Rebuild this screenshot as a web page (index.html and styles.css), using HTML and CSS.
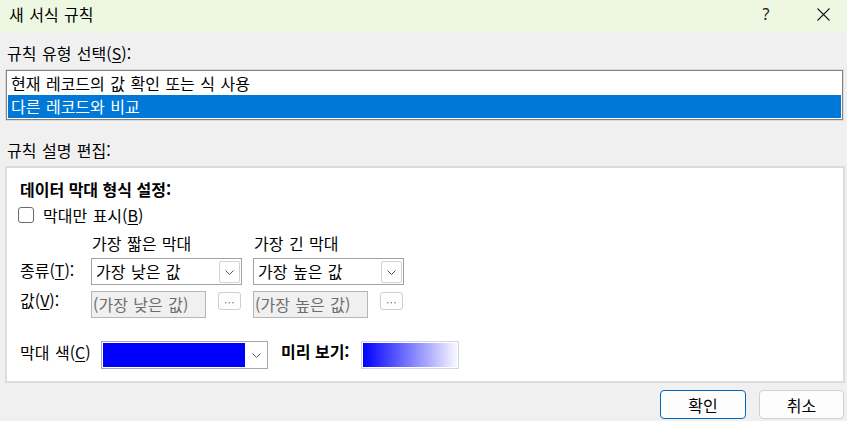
FILE: index.html
```html
<!DOCTYPE html>
<html lang="ko">
<head>
<meta charset="utf-8">
<title>새 서식 규칙</title>
<link rel="stylesheet" href="styles.css">
</head>
<body>
<div class="dialog">
  <div class="titlebar">
    <span class="title">새 서식 규칙</span>
    <span class="tb-btn help">?</span>
    <span class="tb-btn close"><svg width="13" height="13" viewBox="0 0 13 13"><path d="M0.5 0.5L12.5 12.5M12.5 0.5L0.5 12.5" stroke="#1a1a1a" stroke-width="1.1" fill="none"/></svg></span>
  </div>
  <div class="content">
    <div class="label l1">규칙 유형 선택(<u>S</u>):</div>
    <div class="listbox">
      <div class="list-inner">
        <div class="item">현재 레코드의 값 확인 또는 식 사용</div>
        <div class="item selected">다른 레코드와 비교</div>
      </div>
    </div>
    <div class="label l2">규칙 설명 편집:</div>
    <div class="panel">
      <div class="ptitle">데이터 막대 형식 설정:</div>
      <div class="check"><span class="box"></span><span>막대만 표시(<u>B</u>)</span></div>
      <div class="grid">
        <div></div>
        <div class="colhead">가장 짧은 막대</div>
        <div class="colhead">가장 긴 막대</div>
        <div class="rowlabel r1">종류(<u>T</u>):</div>
        <div class="combo"><span class="ctext">가장 낮은 값</span><span class="dd"><svg width="9" height="5" viewBox="0 0 9 5"><path d="M0.5 0.5L4.5 4.5L8.5 0.5" stroke="#555" stroke-width="1" fill="none"/></svg></span></div>
        <div class="combo"><span class="ctext">가장 높은 값</span><span class="dd"><svg width="9" height="5" viewBox="0 0 9 5"><path d="M0.5 0.5L4.5 4.5L8.5 0.5" stroke="#555" stroke-width="1" fill="none"/></svg></span></div>
        <div class="rowlabel r2">값(<u>V</u>):</div>
        <div class="valcell"><div class="tbox">(가장 낮은 값)</div><div class="ellip"><svg width="9" height="2" viewBox="0 0 9 2"><rect x="0" y="0" width="1.4" height="1.4" fill="#8a8a8a"/><rect x="3.6" y="0" width="1.4" height="1.4" fill="#8a8a8a"/><rect x="7.2" y="0" width="1.4" height="1.4" fill="#8a8a8a"/></svg></div></div>
        <div class="valcell"><div class="tbox">(가장 높은 값)</div><div class="ellip"><svg width="9" height="2" viewBox="0 0 9 2"><rect x="0" y="0" width="1.4" height="1.4" fill="#8a8a8a"/><rect x="3.6" y="0" width="1.4" height="1.4" fill="#8a8a8a"/><rect x="7.2" y="0" width="1.4" height="1.4" fill="#8a8a8a"/></svg></div></div>
      </div>
      <div class="colorrow">
        <div class="clabel">막대 색(<u>C</u>)</div>
        <div class="colorbox"><span class="swatch"></span><span class="cdd"><svg width="9" height="5" viewBox="0 0 9 5"><path d="M0.5 0.5L4.5 4.5L8.5 0.5" stroke="#555" stroke-width="1" fill="none"/></svg></span></div>
        <div class="plabel">미리 보기:</div>
        <div class="preview"><span class="grad"></span></div>
      </div>
    </div>
    <div class="buttons">
      <button class="btn primary">확인</button>
      <button class="btn">취소</button>
    </div>
  </div>
</div>
</body>
</html>
```
FILE: styles.css
```css
* { box-sizing: border-box; }
html, body { margin: 0; padding: 0; }
body {
  width: 847px;
  height: 421px;
  overflow: hidden;
  background: #f0f0f0;
  font-family: "Noto Sans CJK KR", "Noto Sans", sans-serif;
  font-size: 16px;
  color: #000;
  word-spacing: 1px;
}
u { text-decoration-thickness: 1px; text-underline-offset: 2px; }
.dialog { width: 847px; height: 421px; display: flex; flex-direction: column; }
.titlebar {
  height: 33px;
  background: #eef7e2;
  display: flex;
  align-items: flex-start;
  padding-top: 4px;
  flex-shrink: 0;
}
.title { padding-left: 9px; line-height: 20px; flex: 1; }
.tb-btn { width: 46px; height: 20px; display: flex; align-items: center; justify-content: center; }
.help { font-family: "Noto Sans", sans-serif; font-size: 16px; margin-right: 11px; color: #1a1a1a; }
.close { margin-right: 1px; }
.content { padding: 0 3px 0 5px; display: flex; flex-direction: column; flex: 1; }
.label { line-height: 20px; padding-left: 2px; }
.l1 { margin-top: 10px; margin-bottom: 6px; }
.l2 { margin-top: 19px; margin-bottom: 6px; }
.listbox { border: 1px solid #dadada; }
.list-inner { border: 1px solid #838383; padding: 1px; background: #fff; }
.item { height: 23px; line-height: 23px; padding-left: 3px; }
.item.selected { background: #0078d7; color: #fff; }
.panel {
  height: 217px;
  border: 2px solid #dcdcdc;
  background: #fff;
  padding: 11px 0 0 13px;
  margin-right: -1px;
}
.ptitle { font-weight: bold; line-height: 20px; word-spacing: 0; }
.check { display: flex; align-items: center; height: 20px; margin-top: 6px; }
.box {
  width: 16px; height: 16px;
  border: 1px solid #6a6a6a;
  border-radius: 3px;
  margin-left: -2px;
  margin-right: 9px;
  background: #fff;
}
.grid {
  display: grid;
  grid-template-columns: 60px 151px 151px;
  grid-template-rows: 20px 27px 27px;
  column-gap: 11px;
  row-gap: 5px;
  margin-top: 8px;
}
.grid > :nth-child(n+7) { margin-top: 1px; }
.colhead { line-height: 20px; padding-left: 1px; }
.rowlabel { line-height: 20px; }
.r1 { padding-top: 2px; }
.r2 { padding-top: 0; margin-top: 0 !important; }
.combo {
  height: 27px;
  border: 1px solid #a2a2a2;
  background: #fff;
  display: flex;
  align-items: flex-start;
}
.ctext { flex: 1; line-height: 25px; padding-left: 4px; }
.dd {
  width: 21px; height: 22px;
  margin: 2px 1px 0 0;
  border: 1px solid #d2d2d2;
  border-radius: 2px;
  display: flex; align-items: center; justify-content: center;
}
.valcell { display: flex; align-items: flex-start; }
.tbox {
  width: 115px; height: 27px;
  border: 1px solid #b6b6b6;
  background: #f0f0f0;
  color: #6d6d6d;
  line-height: 25px;
  padding-left: 1px;
  white-space: nowrap;
  overflow: hidden;
}
.ellip {
  width: 23px; height: 18px;
  margin-left: 12px; margin-top: 1px;
  border: 1px solid #cfcfcf;
  border-radius: 3px;
  background: #fdfdfd;
  display: flex; justify-content: center; align-items: flex-end;
  padding-bottom: 5px;
}
.ellip svg { display: block; }
.colorrow { display: flex; align-items: flex-start; margin-top: 24px; }
.clabel { width: 81px; line-height: 20px; margin-top: 1px; white-space: nowrap; }
.colorbox {
  width: 167px; height: 28px;
  border: 1px solid #a8a8a8;
  padding: 1px 0 1px 1px;
  display: flex;
  background: #fff;
}
.swatch { flex: 1; background: #0000ff; }
.cdd { width: 22px; display: flex; align-items: center; justify-content: center; }
.plabel { width: 80px; margin-left: 13px; font-weight: bold; line-height: 20px; white-space: nowrap; word-spacing: 0; }
.preview {
  width: 98px; height: 28px;
  border: 1px solid #d4d4de;
  padding: 1px;
  background: #fff;
  display: flex;
}
.grad { flex: 1; background: linear-gradient(to right, #0000ff, #f8f8ff); }
.buttons { display: flex; justify-content: flex-end; gap: 13px; margin-top: 7px; }
.btn {
  height: 29px;
  width: 85px;
  border: 1px solid #d0d0d0;
  border-radius: 4px;
  background: #fdfdfd;
  font-family: inherit;
  font-size: 16px;
  color: #000;
  padding: 0;
}
.btn.primary { width: 86px; border-color: #0067c0; }
```
